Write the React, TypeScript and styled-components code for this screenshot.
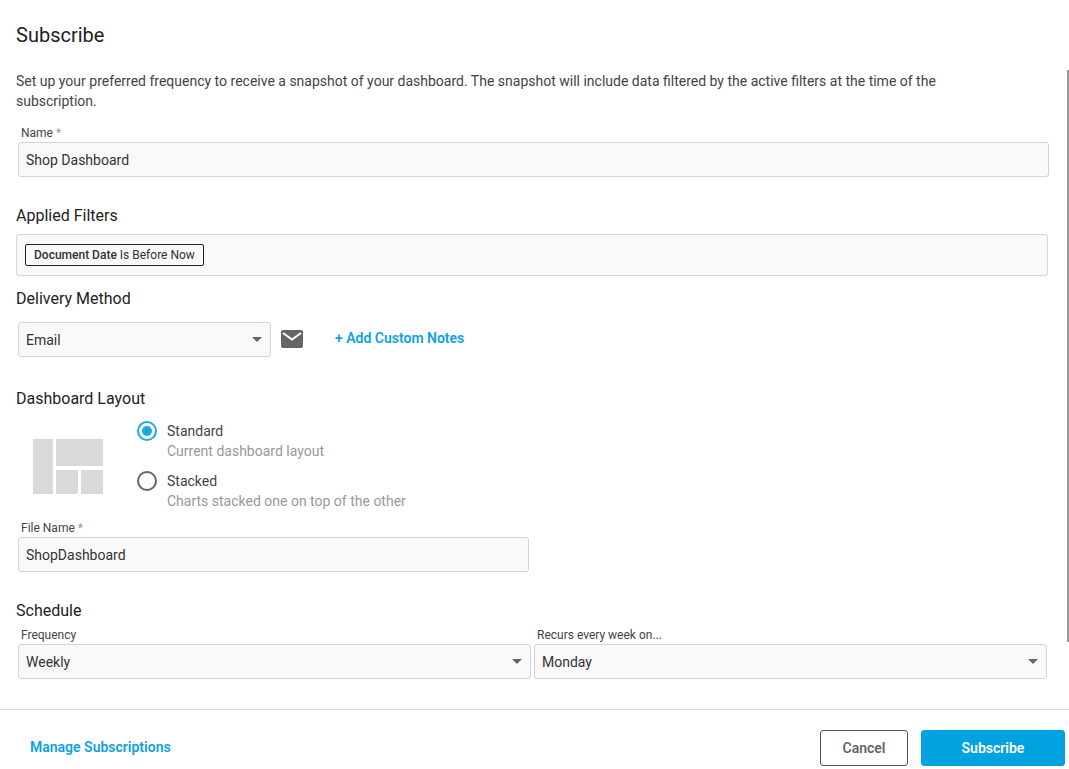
import React from 'react';
import styled, { createGlobalStyle } from 'styled-components';

const Global = createGlobalStyle`
  body { margin: 0; background: #fff; font-family: Roboto, "Liberation Sans", sans-serif; color: #333; }
`;

const Page = styled.div`
  width: 1069px;
  height: 769px;
  display: flex;
  flex-direction: column;
  position: relative;
  overflow: hidden;
`;

const Scroll = styled.div`
  position: absolute;
  right: 0;
  top: 70px;
  width: 2px;
  height: 572px;
  background: #9a9a9a;
`;

const Body = styled.div`
  flex: 1;
  padding: 22px 22px 0 16px;
  display: flex;
  flex-direction: column;
`;

const Title = styled.h1`
  margin: 0;
  font-size: 20px;
  font-weight: 400;
  color: #222;
  line-height: 26px;
`;

const Desc = styled.p`
  margin: 23px 0 0;
  max-width: 965px;
  font-size: 14px;
  line-height: 20px;
  color: #444;
`;

const Label = styled.div<{ $mt?: number }>`
  font-size: 12px;
  color: #444;
  margin: ${p => p.$mt ?? 0}px 0 0 5px;
  line-height: 16px;
  height: 16px;
  span { color: #999; }
`;

const Section = styled.h2<{ $mt: number }>`
  margin: ${p => p.$mt}px 0 0;
  font-size: 16px;
  font-weight: 400;
  color: #222;
  line-height: 20px;
`;

const Field = styled.div<{ $w?: string }>`
  box-sizing: border-box;
  height: 35px;
  width: ${p => p.$w ?? '100%'};
  margin: 1px 0 0 2px;
  border: 1px solid #d3d3df;
  border-radius: 3px;
  background: #f9f9fa;
  display: flex;
  align-items: center;
  padding: 0 8px 0 7px;
  font-size: 14px;
  color: #333;
  justify-content: space-between;
`;

const Caret = styled.span`
  width: 0; height: 0;
  border-left: 5px solid transparent;
  border-right: 5px solid transparent;
  border-top: 5px solid #666;
`;

const FilterBox = styled.div`
  box-sizing: border-box;
  height: 42px;
  margin: 8px -1px 0 0;
  border: 1px solid #d3d3df;
  border-radius: 3px;
  background: #f9f9fa;
  display: flex;
  align-items: center;
  padding: 0 8px;
`;

const Chip = styled.div`
  border: 1px solid #222;
  border-radius: 2px;
  padding: 3px 8px;
  font-size: 12px;
  color: #333;
  b { font-weight: 500; }
`;

const Row = styled.div<{ $mt?: number }>`
  display: flex;
  align-items: center;
  gap: 10px;
  margin-top: ${p => p.$mt ?? 0}px;
`;

const Link = styled.a`
  color: #0ea2de;
  font-size: 14px;
  font-weight: 600;
  margin-left: 22px;
  margin-top: -3px;
`;

const FooterLink = styled(Link)`
  margin: 9px 0 0;
  flex: 1;
`;

const LayoutRow = styled.div`
  display: flex;
  margin-top: 12px;
`;

const Preview = styled.div`
  width: 70px;
  height: 55px;
  margin: 18px 0 0 17px;
  display: grid;
  grid-template-columns: 20px 22px 22px;
  grid-template-rows: 27px 24px;
  gap: 4px 3px;
  div { background: #d9d9d9; }
  div:nth-child(1) { grid-row: 1 / 3; }
  div:nth-child(2) { grid-column: 2 / 4; }
`;

const Options = styled.div`
  margin-left: 34px;
  display: flex;
  flex-direction: column;
  gap: 10px;
`;

const Option = styled.div`
  display: flex;
  gap: 10px;
`;

const Radio = styled.span<{ $on?: boolean }>`
  box-sizing: border-box;
  width: 20px;
  height: 20px;
  border-radius: 50%;
  border: 2px solid ${p => (p.$on ? '#1ba9e1' : '#666')};
  display: flex;
  align-items: center;
  justify-content: center;
  &::after {
    content: '';
    width: 10px;
    height: 10px;
    border-radius: 50%;
    background: ${p => (p.$on ? '#1ba9e1' : 'transparent')};
  }
`;

const OptText = styled.div`
  font-size: 14px;
  line-height: 20px;
  color: #444;
  small { display: block; font-size: 14px; color: #999; }
`;

const Cols = styled.div`
  display: grid;
  grid-template-columns: 1fr 1fr;
  gap: 5px;
  margin-top: 6px;
`;

const SecondLabel = styled(Label)`
  margin-left: 3px;
`;

const SecondField = styled(Field)`
  margin-left: 0;
`;

const Footer = styled.div`
  border-top: 1px solid #ddd;
  height: 60px;
  box-sizing: border-box;
  display: flex;
  align-items: flex-start;
  padding: 20px 4px 0 30px;
  gap: 13px;
`;

const Button = styled.button<{ $primary?: boolean }>`
  box-sizing: border-box;
  height: 36px;
  border-radius: 3px;
  font-family: inherit;
  font-size: 14px;
  font-weight: 600;
  border: 1px solid ${p => (p.$primary ? '#00a2e0' : '#555')};
  background: ${p => (p.$primary ? '#00a2e0' : '#fff')};
  color: ${p => (p.$primary ? '#fff' : '#666')};
  width: ${p => (p.$primary ? 144 : 88)}px;
`;

export default function App() {
  return (
    <Page>
      <Global />
      <Scroll />
      <Body>
        <Title>Subscribe</Title>
        <Desc>
          Set up your preferred frequency to receive a snapshot of your dashboard. The snapshot will include data filtered by the active filters at the time of the subscription.
        </Desc>
        <Label $mt={14}>Name <span>*</span></Label>
        <Field>Shop Dashboard</Field>
        <Section $mt={29}>Applied Filters</Section>
        <FilterBox>
          <Chip><b>Document Date</b> Is Before Now</Chip>
        </FilterBox>
        <Section $mt={13}>Delivery Method</Section>
        <Row $mt={12}>
          <Field $w="253px">Email <Caret /></Field>
          <svg width="22" height="18" viewBox="0 0 22 18">
            <rect x="0" y="0" width="22" height="18" rx="2" fill="#666" />
            <path d="M2 3 L11 9.5 L20 3" stroke="#fff" strokeWidth="2" fill="none" />
          </svg>
          <Link>+ Add Custom Notes</Link>
        </Row>
        <Section $mt={32}>Dashboard Layout</Section>
        <LayoutRow>
          <Preview><div /><div /><div /><div /></Preview>
          <Options>
            <Option>
              <Radio $on />
              <OptText>Standard<small>Current dashboard layout</small></OptText>
            </Option>
            <Option>
              <Radio />
              <OptText>Stacked<small>Charts stacked one on top of the other</small></OptText>
            </Option>
          </Options>
        </LayoutRow>
        <Label $mt={9}>File Name <span>*</span></Label>
        <Field $w="511px">ShopDashboard</Field>
        <Section $mt={29}>Schedule</Section>
        <Cols>
          <div>
            <Label>Frequency</Label>
            <Field>Weekly <Caret /></Field>
          </div>
          <div>
            <SecondLabel>Recurs every week on...</SecondLabel>
            <SecondField>Monday <Caret /></SecondField>
          </div>
        </Cols>
      </Body>
      <Footer>
        <FooterLink>Manage Subscriptions</FooterLink>
        <Button>Cancel</Button>
        <Button $primary>Subscribe</Button>
      </Footer>
    </Page>
  );
}
